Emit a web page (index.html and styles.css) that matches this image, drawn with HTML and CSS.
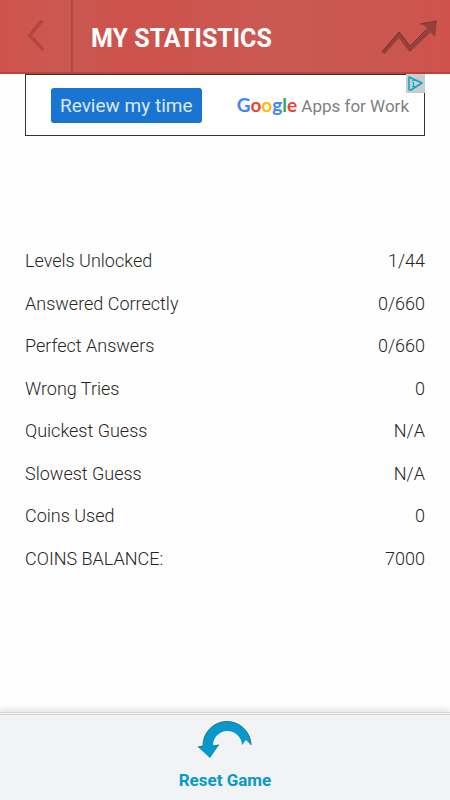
FILE: index.html
```html
<!DOCTYPE html>
<html lang="en">
<head>
    <meta charset="UTF-8">
    <meta name="viewport" content="width=device-width, initial-scale=1.0">
    <title>My Statistics</title>
    <link rel="stylesheet" href="styles.css">
</head>
<body>
    <header class="top-bar">
        <button type="button" class="back-btn" aria-label="Back">
            <svg width="20" height="34" viewBox="0 0 20 34">
                <path d="M16 2 L4 17 L17 31" fill="none" stroke="#b8483f" stroke-width="3"/>
                <path d="M17 4 L14 2 L2 17 M7 18 L17 30" fill="none" stroke="#9e403a" stroke-width="1"/>
            </svg>
        </button>
        <h1>MY STATISTICS</h1>
        <svg class="chart-icon" width="58" height="36" viewBox="0 0 58 36">
            <path d="M2 33 L18 15 L29 29 L48 11" fill="none" stroke="#963f3b" stroke-width="4"/>
            <path d="M39 4 L56 1 L54 17 L50 13 L47 10 L44 6 Z" fill="#963f3b"/>
            <path d="M1 32 L18 12 L29 26 L46 9 M39 4 L56 1" fill="none" stroke="#793430" stroke-width="1"/>
        </svg>
    </header>
    <main>
        <div class="ad">
            <a href="#" class="ad-btn">Review my time</a>
            <a href="#" class="ad-brand"><span class="google"><span class="blue">G</span><span class="red">o</span><span class="yellow">o</span><span class="blue">g</span><span class="green">l</span><span class="red">e</span></span> Apps for Work</a>
            <a href="#" class="ad-choices" aria-label="Ad choices">
                <svg width="19" height="19" viewBox="0 0 19 19">
                    <path d="M3 3 L16 9 L5 16 Q3 17 3 15 Z" fill="none" stroke="#00a9c8" stroke-width="1.5" stroke-linejoin="round"/>
                    <path d="M6 8.500 H7.500 V12.500 M6 12.500 H9.500 M6.500 6.500 H8.500" fill="none" stroke="#00a9c8" stroke-width="1"/>
                </svg>
            </a>
        </div>
        <table class="stats">
            <tr><th scope="row">Levels Unlocked</th><td>1/44</td></tr>
            <tr><th scope="row">Answered Correctly</th><td>0/660</td></tr>
            <tr><th scope="row">Perfect Answers</th><td>0/660</td></tr>
            <tr><th scope="row">Wrong Tries</th><td>0</td></tr>
            <tr><th scope="row">Quickest Guess</th><td>N/A</td></tr>
            <tr><th scope="row">Slowest Guess</th><td>N/A</td></tr>
            <tr><th scope="row">Coins Used</th><td>0</td></tr>
            <tr><th scope="row">COINS BALANCE:</th><td>7000</td></tr>
        </table>
    </main>
    <footer class="bottom-bar">
        <button type="button" class="reset-btn">
            <svg width="56" height="39" viewBox="0 0 56 39">
                <path d="M6 26 A24 24 0 0 1 54 25 L49 20 L45 25 A14 14 0 0 0 16 26 L22 25 L13 38 L1 27 Z" fill="#0798cd"/>
                <path d="M1 27 L6 26 A24 24 0 0 1 54 25 M16 26 L22 25" fill="none" stroke="#246f8c" stroke-width="1"/>
            </svg>
            <span>Reset Game</span>
        </button>
    </footer>
</body>
</html>
```

FILE: styles.css
```css
* {
    box-sizing: border-box;
}
body {
    font-family: Roboto, sans-serif;
    margin: 0;
    min-height: 100vh;
    display: flex;
    flex-direction: column;
    background: #fefefe;
    color: #27251f;
}
button {
    font-family: inherit;
    border: none;
    background: none;
    padding: 0;
    cursor: pointer;
}
a {
    text-decoration: none;
}
.top-bar {
    display: flex;
    align-items: stretch;
    height: 74px;
    padding-right: 11px;
    background: linear-gradient(to right, #cf534b, #ca5953 15%, #cd534c 25%, #cd534c 35%, #ca5953 60%, #ca5750 85%, #cf534b);
    border-bottom: 2px solid #b9433f;
}
.back-btn {
    width: 73px;
    border-right: 2px solid #b2483f;
    padding-top: 2px;
}
.top-bar h1 {
    flex: 1;
    margin: 0;
    padding: 5px 0 0 18px;
    align-self: center;
    font-size: 25px;
    line-height: 32px;
    font-weight: 700;
    color: #fff;
}
.chart-icon {
    align-self: center;
    margin-top: 3px;
}
main {
    flex: 1;
    padding: 0 25px;
}
.ad {
    position: relative;
    display: flex;
    align-items: center;
    justify-content: space-between;
    height: 62px;
    padding: 0 15px 0 25px;
    background: #fff;
    border: 1px solid #333;
}
.ad-btn {
    padding: 0 9px;
    border-radius: 3px;
    background: #1a75d2;
    color: #dce9f8;
    font-size: 19px;
    line-height: 35px;
}
.ad-brand {
    font-size: 17px;
    line-height: 35px;
    color: #7d7f82;
}
.google {
    font-family: Lato, sans-serif;
    font-size: 19px;
    font-weight: 700;
}
.blue {
    color: #4285f4;
}
.red {
    color: #ea4335;
}
.yellow {
    color: #fbbc05;
}
.green {
    color: #34a853;
}
.ad-choices {
    position: absolute;
    top: -1px;
    right: -1px;
    width: 19px;
    height: 19px;
    background: #ccc;
}
.ad-choices svg {
    display: block;
}
.stats {
    width: 100%;
    height: 340px;
    margin-top: 104px;
    border-collapse: collapse;
    font-size: 18px;
    line-height: 22px;
}
.stats th,
.stats td {
    padding: 0;
    font-weight: 300;
    text-align: left;
}
.stats td {
    text-align: right;
}
.bottom-bar {
    display: flex;
    justify-content: center;
    height: 88px;
    padding-top: 5px;
    background: #f1f3f5;
    border-top: 3px double #d4d4d4;
    box-shadow: 0 -3px 6px #e4e4e4;
}
.reset-btn {
    display: flex;
    flex-direction: column;
    align-items: center;
    gap: 10px;
    color: #0798cd;
    font-size: 17px;
    line-height: 22px;
    font-weight: 700;
}
```
